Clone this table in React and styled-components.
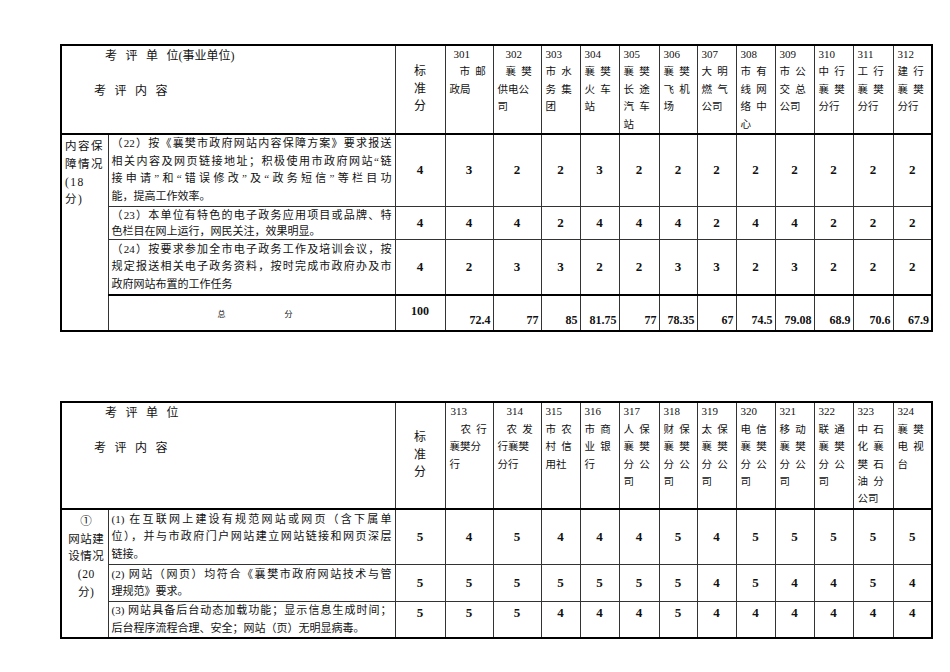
import React from 'react';
import styled, { createGlobalStyle } from 'styled-components';

const GlobalStyle = createGlobalStyle`
  html, body { margin: 0; padding: 0; background: #fff; }
  body { font-family: "Liberation Serif", "Noto Sans CJK SC", serif; color: #000; }
`;

const Page = styled.div`
  padding: 44px 0 0 60px;
  display: flex;
  flex-direction: column;
  gap: 69px;
`;

const Sheet = styled.table`
  width: 872px;
  table-layout: fixed;
  border-collapse: collapse;
  border: 2px solid #000;
  font-family: "Liberation Serif", "Noto Sans CJK SC", serif;
  color: #111;
`;

const Row = styled.tr`
  height: ${(p) => p.$h}px;
  & > td { border-bottom: ${(p) => (p.$thick ? '2px solid #000' : '1px solid #333')}; }
`;

const Cell = styled.td`
  border: 1px solid #333;
  padding: 0;
  overflow: hidden;
`;

const TitleCell = styled(Cell)`
  vertical-align: top;
  font-size: 12px;
  line-height: 18px;
  padding-top: 1px;
`;

const TitleLine = styled.div`
  padding-left: ${(p) => p.$indent}px;
  margin-bottom: ${(p) => p.$gap || 0}px;
  white-space: nowrap;
`;

const Spread = styled.span`
  letter-spacing: 8.5px;
`;

const StdHead = styled(Cell)`
  text-align: center;
  vertical-align: middle;
  font-size: 12px;
  line-height: 17.5px;
`;

const UnitHead = styled(Cell)`
  vertical-align: top;
  font-size: 10.5px;
  line-height: 17.4px;
  padding: 0 1px 0 4px;
`;

const UnitLine = styled.div`
  padding-left: ${(p) => p.$indent || 0}px;
  white-space: nowrap;
  font-size: ${(p) => (p.$num ? '11px' : '10.5px')};
`;

const Category = styled(Cell)`
  vertical-align: top;
  text-align: ${(p) => p.$align};
  font-size: 11.5px;
  letter-spacing: ${(p) => (p.$align === 'left' ? '1.5px' : '0.5px')};
  line-height: 17.8px;
  padding: 3px 0 0 3px;
`;

const Desc = styled(Cell)`
  vertical-align: middle;
  font-size: 11px;
  line-height: ${(p) => p.$lh || 17.5}px;
  padding: 0 3px 0 3px;
`;

const DescLine = styled.div`
  text-align: justify;
  text-align-last: ${(p) => (p.$last ? 'left' : 'justify')};
  white-space: nowrap;
`;

const Score = styled(Cell)`
  text-align: center;
  vertical-align: ${(p) => p.$valign || 'middle'};
  padding-top: ${(p) => p.$pt || 0}px;
  font-size: 13px;
  font-weight: bold;
  font-family: "Liberation Serif", serif;
`;

const Total = styled(Cell)`
  text-align: right;
  vertical-align: bottom;
  padding: 0 2px 2px 0;
  font-size: 12px;
  font-weight: bold;
  font-family: "Liberation Serif", serif;
`;

const TotalStd = styled(Cell)`
  text-align: center;
  vertical-align: middle;
  padding-bottom: 3px;
  font-size: 12px;
  font-weight: bold;
  font-family: "Liberation Serif", serif;
`;

const TotalLabel = styled(Cell)`
  vertical-align: middle;
  padding-left: 109px;
  font-size: 8px;
  letter-spacing: 59px;
  white-space: nowrap;
`;

const widths = [47, 287, 50, 48, 48, 39, 39, 40, 38, 39, 39, 39, 39, 40, 39];

const Cols = () => (
  <colgroup>
    {widths.map((w, i) => (
      <col key={i} style={{ width: w }} />
    ))}
  </colgroup>
);

const S = '\u2002';

const units1 = [
  [['301', 4, true], [`市${S}邮`, 10], ['政局']],
  [['302', 8, true], [`襄${S}樊`, 8], ['供电公'], ['司']],
  [['303', 0, true], [`市${S}水`], [`务${S}集`], ['团']],
  [['304', 0, true], [`襄${S}樊`], [`火${S}车`], ['站']],
  [['305', 0, true], [`襄${S}樊`], [`长${S}途`], [`汽${S}车`], ['站']],
  [['306', 0, true], [`襄${S}樊`], [`飞${S}机`], ['场']],
  [['307', 0, true], [`大${S}明`], [`燃${S}气`], ['公司']],
  [['308', 0, true], [`市${S}有`], [`线${S}网`], [`络${S}中`], ['心']],
  [['309', 0, true], [`市${S}公`], [`交${S}总`], ['公司']],
  [['310', 0, true], [`中${S}行`], [`襄${S}樊`], ['分行']],
  [['311', 0, true], [`工${S}行`], [`襄${S}樊`], ['分行']],
  [['312', 0, true], [`建${S}行`], [`襄${S}樊`], ['分行']],
];

const units2 = [
  [['313', 1, true], [`农${S}行`, 11], ['襄樊分'], ['行']],
  [['314', 9, true], [`农${S}发`, 9], ['行襄樊'], ['分行']],
  [['315', 0, true], [`市${S}农`], [`村${S}信`], ['用社']],
  [['316', 0, true], [`市${S}商`], [`业${S}银`], ['行']],
  [['317', 0, true], [`人${S}保`], [`襄${S}樊`], [`分${S}公`], ['司']],
  [['318', 0, true], [`财${S}保`], [`襄${S}樊`], [`分${S}公`], ['司']],
  [['319', 0, true], [`太${S}保`], [`襄${S}樊`], [`分${S}公`], ['司']],
  [['320', 0, true], [`电${S}信`], [`襄${S}樊`], [`分${S}公`], ['司']],
  [['321', 0, true], [`移${S}动`], [`襄${S}樊`], [`分${S}公`], ['司']],
  [['322', 0, true], [`联${S}通`], [`襄${S}樊`], [`分${S}公`], ['司']],
  [['323', 0, true], [`中${S}石`], [`化${S}襄`], [`樊${S}石`], [`油${S}分`], ['公司']],
  [['324', 0, true], [`襄${S}樊`], [`电${S}视`], ['台']],
];

const Lines = ({ lines }) =>
  lines.map((l, i) => (
    <DescLine key={i} $last={i === lines.length - 1}>
      {l}
    </DescLine>
  ));

const Header = ({ sub, units, h }) => (
  <Row $h={h} $thick>
    <TitleCell colSpan={2}>
      <TitleLine $indent={43} $gap={17}>
        <Spread>考评单</Spread>位{sub}
      </TitleLine>
      <TitleLine $indent={32}>
        <Spread>考评内</Spread>容
      </TitleLine>
    </TitleCell>
    <StdHead>
      标<br />准<br />分
    </StdHead>
    {units.map((u, i) => (
      <UnitHead key={i}>
        {u.map(([t, ind, num], j) => (
          <UnitLine key={j} $indent={ind} $num={num}>
            {t}
          </UnitLine>
        ))}
      </UnitHead>
    ))}
  </Row>
);

const ScoreRow = ({ h, std, vals, desc, first, valign, pt, thick, lh }) => (
  <Row $h={h} $thick={thick}>
    {first}
    <Desc $lh={lh}>
      <Lines lines={desc} />
    </Desc>
    <Score $valign={valign} $pt={pt}>{std}</Score>
    {vals.map((v, i) => (
      <Score key={i} $valign={valign} $pt={pt}>
        {v}
      </Score>
    ))}
  </Row>
);

const totals = ['72.4', '77', '85', '81.75', '77', '78.35', '67', '74.5', '79.08', '68.9', '70.6', '67.9'];

export default function App() {
  return (
    <>
      <GlobalStyle />
      <Page lang="zh-CN">
        <Sheet>
          <Cols />
          <tbody>
            <Header sub="(事业单位)" units={units1} h={89} />
            <ScoreRow
              h={72}
              std="4"
              lh={17.7}
              vals={[3, 2, 2, 3, 2, 2, 2, 2, 2, 2, 2, 2]}
              first={
                <Category rowSpan={4} $align="left">
                  内容保<br />障情况<br />(18<br />分)
                </Category>
              }
              desc={[
                '（22）按《襄樊市政府网站内容保障方案》要求报送',
                '相关内容及网页链接地址；积极使用市政府网站“链',
                '接申请”和“错误修改”及“政务短信”等栏目功',
                '能，提高工作效率。',
              ]}
            />
            <ScoreRow
              h={33}
              std="4"
              lh={16}
              vals={[4, 4, 2, 4, 4, 4, 2, 4, 4, 2, 2, 2]}
              desc={['（23）本单位有特色的电子政务应用项目或品牌、特', '色栏目在网上运行，网民关注，效果明显。']}
            />
            <ScoreRow
              h={56}
              std="4"
              thick
              vals={[2, 3, 3, 2, 2, 3, 3, 2, 3, 2, 2, 2]}
              desc={[
                '（24）按要求参加全市电子政务工作及培训会议，按',
                '规定报送相关电子政务资料，按时完成市政府办及市',
                '政府网站布置的工作任务',
              ]}
            />
            <Row $h={36}>
              <TotalLabel>总分</TotalLabel>
              <TotalStd>100</TotalStd>
              {totals.map((t, i) => (
                <Total key={i}>{t}</Total>
              ))}
            </Row>
          </tbody>
        </Sheet>

        <Sheet>
          <Cols />
          <tbody>
            <Header sub="" units={units2} h={106} />
            <ScoreRow
              h={56}
              std="5"
              vals={[4, 5, 4, 4, 4, 5, 4, 5, 5, 5, 5, 5]}
              first={
                <Category rowSpan={3} $align="center">
                  ①<br />网站建<br />设情况<br />(20<br />分)
                </Category>
              }
              desc={[
                '(1) 在互联网上建设有规范网站或网页（含下属单',
                '位），并与市政府门户网站建立网站链接和网页深层',
                '链接。',
              ]}
            />
            <ScoreRow
              h={37}
              std="5"
              vals={[5, 5, 5, 5, 5, 5, 4, 5, 4, 4, 5, 4]}
              desc={['(2) 网站（网页）均符合《襄樊市政府网站技术与管', '理规范》要求。']}
            />
            <ScoreRow
              h={36}
              std="5"
              valign="top"
              pt={3}
              vals={[5, 5, 4, 4, 4, 5, 4, 4, 4, 4, 4, 4]}
              desc={['(3) 网站具备后台动态加载功能；显示信息生成时间；', '后台程序流程合理、安全；网站（页）无明显病毒。']}
            />
          </tbody>
        </Sheet>
      </Page>
    </>
  );
}
